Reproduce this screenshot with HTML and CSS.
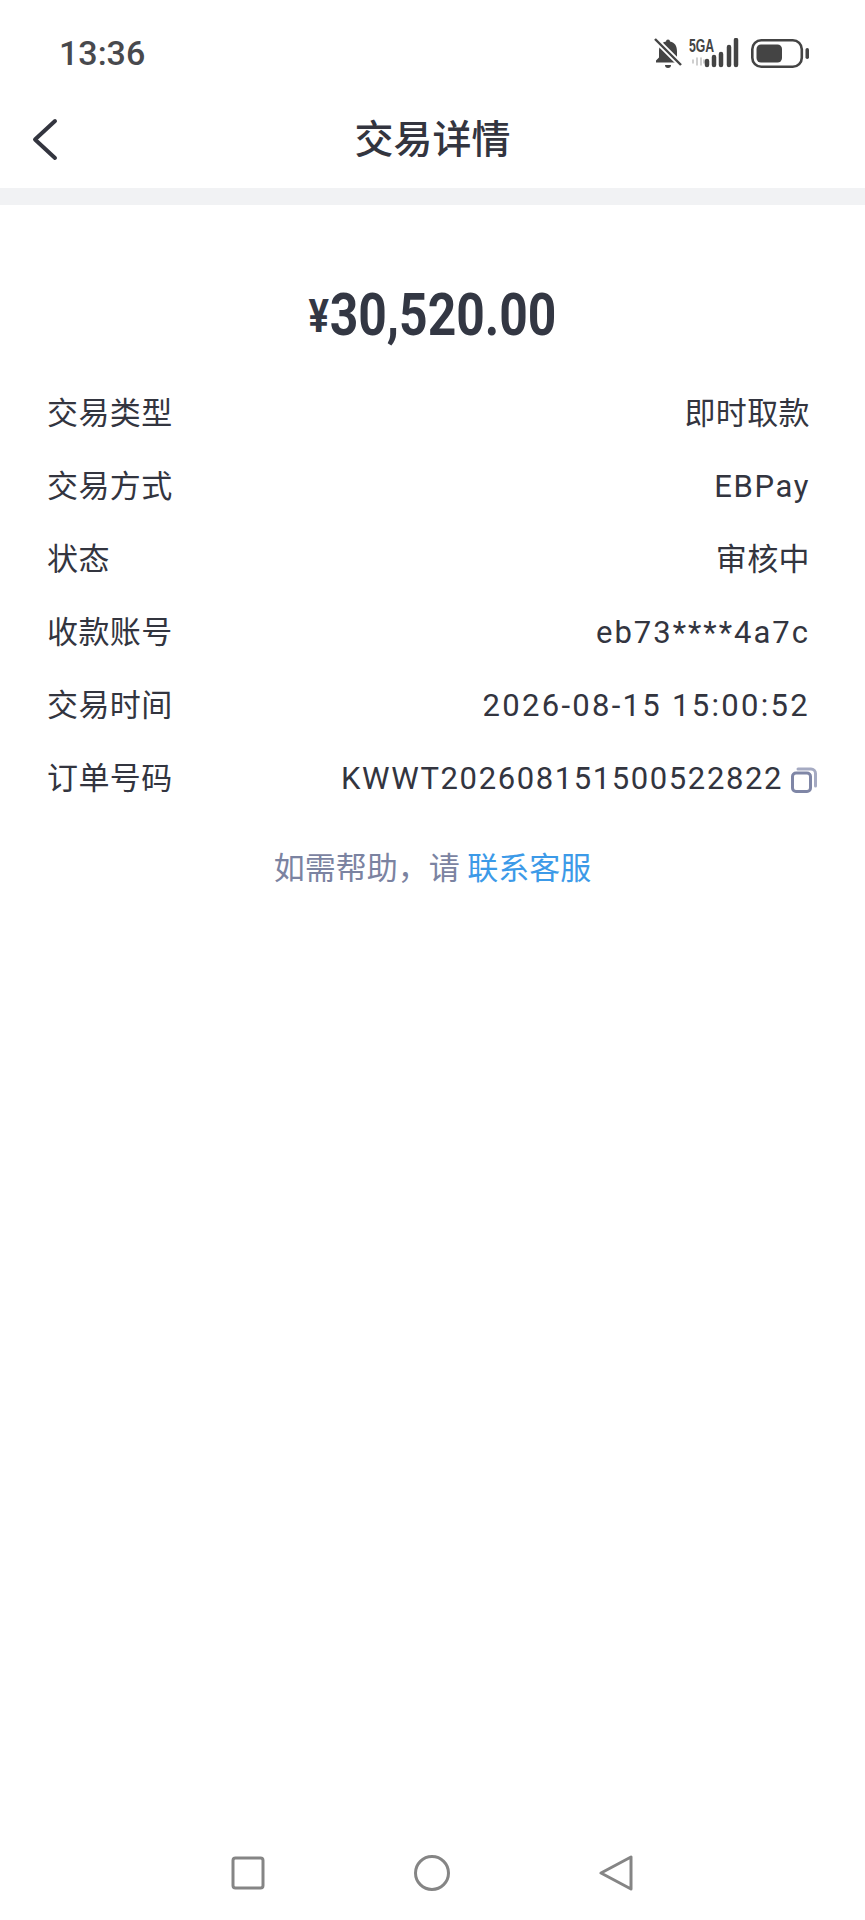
FILE: index.html
```html
<!DOCTYPE html>
<html lang="zh-CN">
<head>
    <meta charset="UTF-8">
    <meta name="viewport" content="width=device-width, initial-scale=1.0">
    <title>交易详情</title>
    <link rel="stylesheet" href="styles.css">
</head>
<body>

    <div class="screen">
        <div class="status-bar">
            <span class="clock">13:36</span>
            <div class="status-icons">
                <svg class="icon-bell" viewBox="0 0 28 30">
                    <path d="M14 1.500a2 2 0 0 1 2 2c5 1 7 4.500 7 10v6l3 3v2H2v-2l3-3v-6c0-5.500 2-9 7-10a2 2 0 0 1 2-2z" fill="#444"/>
                    <path d="M11 27h6a3 3 0 0 1-6 0z" fill="#444"/>
                    <path d="M1 1l26 26" stroke="#fff" stroke-width="6"/>
                    <path d="M1 1l26 26" stroke="#444" stroke-width="2.400"/>
                </svg>
                <div class="signal">
                    <span class="net-label">5GA</span>
                    <svg class="icon-bars" viewBox="0 0 50 30">
                        <path d="M4 22v3M8 20v7M12 20v7M15 22v3" stroke="#c4c4c4" stroke-width="1.600" stroke-linecap="round"/>
                        <path d="M18 23v4M25 19v8M32 16v11M40 9v18M47 2v25" stroke="#444" stroke-width="4.500" stroke-linecap="round"/>
                    </svg>
                </div>
                <svg class="icon-battery" viewBox="0 0 58 29">
                    <rect x="1.300" y="1.300" width="49.500" height="26.400" rx="9" fill="none" stroke="#444" stroke-width="2.600"/>
                    <rect x="5.500" y="5.500" width="25.500" height="18" rx="4.500" fill="#444"/>
                    <rect x="54.500" y="9" width="3.500" height="11" rx="1.700" fill="#444"/>
                </svg>
            </div>
        </div>

        <header class="nav-bar">
            <svg class="icon-back" viewBox="0 0 27 43">
                <path d="M24 3L4 21.500 24 40" fill="none" stroke="#33353f" stroke-width="4" stroke-linecap="round" stroke-linejoin="round"/>
            </svg>
            <h1 class="page-title">交易详情</h1>
        </header>

        <div class="divider"></div>

        <main class="details">
            <div class="amount"><span class="amount-text"><span class="currency">¥</span>30,520.00</span></div>

            <div class="detail-list">
                <div class="detail-row"><span>交易类型</span><span>即时取款</span></div>
                <div class="detail-row"><span>交易方式</span><span class="latin">EBPay</span></div>
                <div class="detail-row"><span>状态</span><span>审核中</span></div>
                <div class="detail-row"><span>收款账号</span><span class="latin account">eb73****4a7c</span></div>
                <div class="detail-row"><span>交易时间</span><span class="latin date">2026-08-15 15:00:52</span></div>
                <div class="detail-row order-row">
                    <span>订单号码</span>
                    <span class="order-value">
                        <span class="latin order-no">KWWT202608151500522822</span>
                        <svg class="icon-copy" viewBox="0 0 26 26">
                            <rect x="1.500" y="6" width="18" height="18.500" rx="3.500" fill="none" stroke="#7f86a6" stroke-width="3"/>
                            <path d="M7 2h13a4.500 4.500 0 0 1 4.500 4.500V19" fill="none" stroke="#a5aac2" stroke-width="3" stroke-linecap="round"/>
                        </svg>
                    </span>
                </div>
            </div>

            <p class="help">如需帮助，请 <a class="help-link">联系客服</a></p>
        </main>

        <nav class="system-nav">
            <svg class="nav-btn" viewBox="0 0 36 36"><rect x="3" y="3" width="30" height="30" rx="2.500" fill="none" stroke="#858585" stroke-width="3"/></svg>
            <svg class="nav-btn" viewBox="0 0 36 36"><circle cx="18" cy="18" r="16.500" fill="none" stroke="#858585" stroke-width="3"/></svg>
            <svg class="nav-btn" viewBox="0 0 36 36"><path d="M3 18L33 2v32z" fill="none" stroke="#858585" stroke-width="3" stroke-linejoin="round"/></svg>
        </nav>
    </div>

</body>
</html>
```

FILE: styles.css
```css
body {
    margin: 0;
    padding: 0;
    background-color: #fff;
    color: #33353f;
    font-family: Roboto, 'Noto Sans CJK SC', sans-serif;
}

.screen {
    width: 865px;
    height: 1920px;
    display: flex;
    flex-direction: column;
    overflow: hidden;
}

/* Barre d'etat */
.status-bar {
    height: 88px;
    box-sizing: border-box;
    padding: 18px 56px 0 59px;
    display: flex;
    align-items: center;
    justify-content: space-between;
}

.clock {
    font-size: 34px;
    font-weight: 500;
    color: #48494d;
}

.status-icons {
    display: flex;
    align-items: center;
    gap: 7px;
}

.icon-bell {
    width: 28px;
    height: 30px;
}

.signal {
    position: relative;
    width: 50px;
    height: 30px;
    margin-right: 5px;
}

.net-label {
    position: absolute;
    left: 0;
    top: -2px;
    font-family: 'Liberation Sans', sans-serif;
    font-size: 18px;
    font-weight: 700;
    color: #444;
    transform: scaleX(0.68);
    transform-origin: left top;
}

.icon-bars {
    position: absolute;
    left: 0;
    top: 0;
    width: 50px;
    height: 30px;
}

.icon-battery {
    width: 58px;
    height: 29px;
}

/* Barre de navigation */
.nav-bar {
    height: 100px;
    position: relative;
    display: flex;
    align-items: center;
    justify-content: center;
}

.icon-back {
    position: absolute;
    left: 31px;
    top: 30px;
    width: 27px;
    height: 43px;
}

.page-title {
    margin: 0;
    font-size: 39px;
    font-weight: 500;
    line-height: 1;
    position: relative;
    top: 2px;
}

.divider {
    height: 17px;
    background-color: #f1f2f4;
}

.details {
    flex: 1;
}

.amount {
    margin-top: 78px;
    height: 64px;
    line-height: 64px;
    text-align: center;
    font-size: 60px;
    font-weight: 700;
    color: #333743;
}

.amount-text {
    display: inline-block;
    transform: scaleX(0.83);
}

.currency {
    font-size: 46px;
    margin-right: 1px;
    vertical-align: 3px;
}

.detail-list {
    margin-top: 30px;
    padding: 0 55px 0 47px;
}

.detail-row {
    height: 73px;
    display: flex;
    align-items: center;
    justify-content: space-between;
    font-size: 31px;
    line-height: 42px;
    letter-spacing: 0.4px;
}

.latin {
    letter-spacing: 1.6px;
}

.account {
    letter-spacing: 2px;
}

.date {
    letter-spacing: 2.3px;
}

.order-no {
    letter-spacing: 1.6px;
}

.order-row {
    margin-right: -7px;
}

.order-value {
    display: flex;
    align-items: center;
    gap: 8px;
}

.icon-copy {
    width: 26px;
    height: 26px;
    position: relative;
    top: 1px;
}

.help {
    margin: 33px 0 0;
    text-align: center;
    font-size: 31px;
    line-height: 42px;
    color: #7b83a1;
}

.help-link {
    color: #3c9ae8;
}

/* Boutons systeme */
.system-nav {
    height: 65px;
    box-sizing: border-box;
    padding: 0 231px 0 230px;
    display: flex;
    align-items: flex-start;
    justify-content: space-between;
}

.nav-btn {
    width: 36px;
    height: 36px;
}
```
